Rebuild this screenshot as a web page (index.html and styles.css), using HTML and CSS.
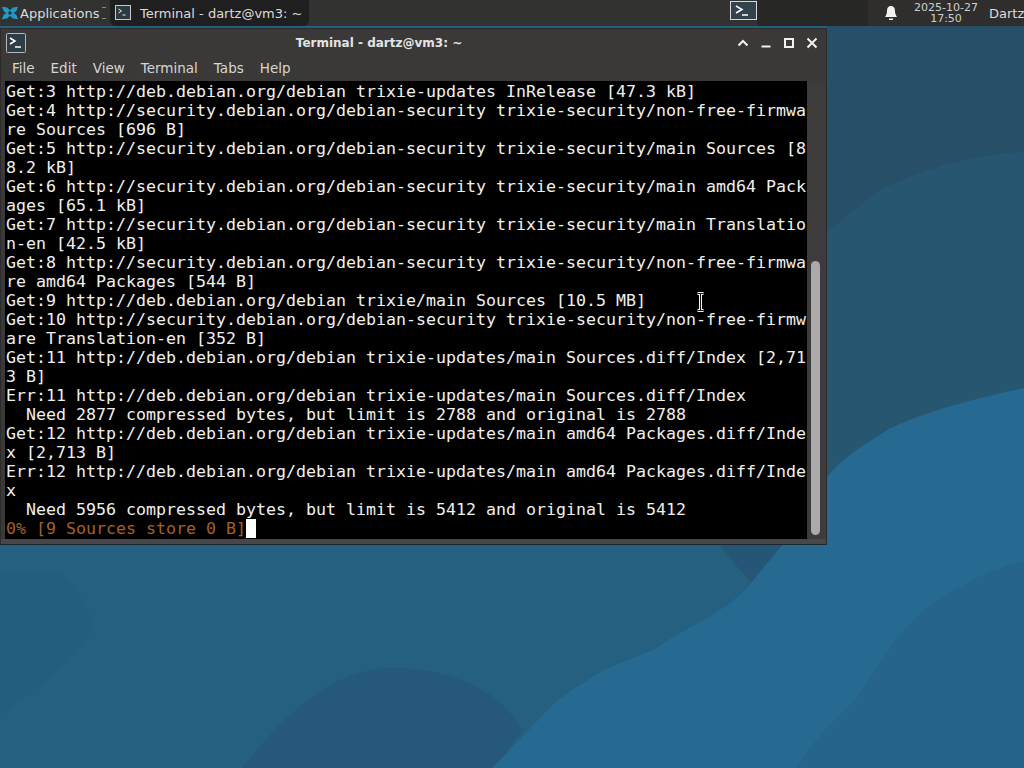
FILE: index.html
```html
<!DOCTYPE html>
<html lang="en">
<head>
<meta charset="utf-8">
<title>Terminal - dartz@vm3: ~</title>
<link rel="stylesheet" href="styles.css">
</head>
<body>
<svg class="wallpaper" viewBox="0 0 1024 768" preserveAspectRatio="none" aria-hidden="true">
  <rect width="1024" height="768" fill="#256080"/>
  <path d="M0 573H60C90 600 100 630 80 650C50 680 20 700 0 715Z" fill="#245e7e"/>
  <path d="M242 768C280 720 330 668 392 668C450 668 500 690 522 730L496 768Z" fill="#25587a"/>
  <path d="M718 544H790L751 583Z" fill="#265676"/>
  <path d="M827 477C840 460 860 447 887 430C910 418 953 403 1024 388V768H492C515 745 535 722 555 703C570 690 580 685 588 680C610 665 630 660 653 650C690 625 730 610 751 583C765 565 775 555 783 544H827Z" fill="#266a92"/>
  <path d="M797 768C810 740 840 720 862 690C880 660 900 630 927 607C960 585 990 570 1024 560V768Z" fill="#26648b"/>
  <path d="M827 232C845 218 860 205 880 190C905 178 930 168 953 163C980 157 1000 153 1024 152V388C953 403 910 418 887 430C860 447 840 460 827 477Z" fill="#275670"/>
  <path d="M827 26H1024V152C1000 153 980 157 953 163C930 168 905 178 880 190C860 205 845 218 827 232Z" fill="#284f68"/>
</svg>

<header class="panel">
  <div class="apps">
    <svg class="logo" viewBox="0 0 20 20" aria-hidden="true">
      <path d="M1 3l6 1 3 3 3-3 6-1-2 5-3 2 3 2 2 5-6-1-3-3-3 3-6 1 2-5 3-2-3-2z" fill="#1f9bc4"/>
      <circle cx="10" cy="10" r="2" fill="#1b3340"/>
    </svg>
    <span>Applications</span>
    <span class="sep"></span>
  </div>
  <div class="task">
    <svg class="task-icon" viewBox="0 0 16 16" aria-hidden="true">
      <rect x=".5" y=".5" width="15" height="14" fill="#2c3a42" stroke="#c9c9c9"/>
      <path d="M3.500 4l3 2-3 2M7.500 10h3" fill="none" stroke="#eee"/>
    </svg>
    <span>Terminal - dartz@vm3: ~</span>
  </div>
  <div class="spacer"></div>
  <div class="launcher">
    <svg class="launch-icon" viewBox="0 0 27 19" aria-hidden="true">
      <rect x=".5" y=".5" width="26" height="18" fill="#33434d" stroke="#d8d8d8"/>
      <path d="M6 5l6 3.500-6 3.500M12 14h6" fill="none" stroke="#fff" stroke-width="1.500"/>
    </svg>
  </div>
  <div class="panel-dark"></div>
  <div class="tray">
    <svg class="bell" viewBox="0 0 14 16" aria-hidden="true">
      <path d="M7 1c3 0 4 2.500 4 5 0 3 1 4.500 2 6H1c1-1.500 2-3 2-6 0-2.500 1-5 4-5z" fill="#f2f2f2"/>
      <rect x="5" y="13.500" width="4" height="1.500" fill="#f2f2f2"/>
    </svg>
    <div class="clock"><span>2025-10-27</span><span>17:50</span></div>
    <span class="user">Dartz</span>
  </div>
</header>

<main class="window">
  <div class="titlebar">
    <svg class="win-icon" viewBox="0 0 20 20" aria-hidden="true">
      <rect x=".5" y=".5" width="19" height="19" rx="1" fill="#2d3c45" stroke="#b8b8b8"/>
      <path d="M4 5l5 3-5 3M9 14h6" fill="none" stroke="#fff" stroke-width="1.500"/>
    </svg>
    <div class="title">Terminal - dartz@vm3: ~</div>
    <div class="controls">
      <svg viewBox="0 0 12 12" aria-hidden="true"><path d="M1.500 8.500L6 4l4.500 4.500" fill="none" stroke="#f2f2f2" stroke-width="2"/></svg>
      <svg viewBox="0 0 12 12" aria-hidden="true"><path d="M1.500 9.500h9" stroke="#f2f2f2" stroke-width="2"/></svg>
      <svg viewBox="0 0 12 12" aria-hidden="true"><rect x="2" y="2" width="8" height="8" fill="none" stroke="#f2f2f2" stroke-width="2"/></svg>
      <svg viewBox="0 0 12 12" aria-hidden="true"><path d="M1.500 1.500l9 9M10.500 1.500l-9 9" stroke="#f2f2f2" stroke-width="2"/></svg>
    </div>
  </div>
  <nav class="menubar">
    <span>File</span><span>Edit</span><span>View</span><span>Terminal</span><span>Tabs</span><span>Help</span>
  </nav>
  <div class="term-row">
    <pre class="term">Get:3 http://deb.debian.org/debian trixie-updates InRelease [47.3 kB]
Get:4 http://security.debian.org/debian-security trixie-security/non-free-firmwa
re Sources [696 B]
Get:5 http://security.debian.org/debian-security trixie-security/main Sources [8
8.2 kB]
Get:6 http://security.debian.org/debian-security trixie-security/main amd64 Pack
ages [65.1 kB]
Get:7 http://security.debian.org/debian-security trixie-security/main Translatio
n-en [42.5 kB]
Get:8 http://security.debian.org/debian-security trixie-security/non-free-firmwa
re amd64 Packages [544 B]
Get:9 http://deb.debian.org/debian trixie/main Sources [10.5 MB]
Get:10 http://security.debian.org/debian-security trixie-security/non-free-firmw
are Translation-en [352 B]
Get:11 http://deb.debian.org/debian trixie-updates/main Sources.diff/Index [2,71
3 B]
Err:11 http://deb.debian.org/debian trixie-updates/main Sources.diff/Index
  Need 2877 compressed bytes, but limit is 2788 and original is 2788
Get:12 http://deb.debian.org/debian trixie-updates/main amd64 Packages.diff/Inde
x [2,713 B]
Err:12 http://deb.debian.org/debian trixie-updates/main amd64 Packages.diff/Inde
x
  Need 5956 compressed bytes, but limit is 5412 and original is 5412
<span class="progress">0% [9 Sources store 0 B]</span><span class="cursor"> </span></pre>
    <div class="scrollbar"><div class="thumb"></div></div>
    <svg class="ibeam" viewBox="0 0 9 20" aria-hidden="true">
      <path d="M1.500 1.500h6M4.500 1.500v17M1.500 18.500h6" fill="none" stroke="#f4f4f4" stroke-width="3"/>
      <path d="M1.500 1.500h6M4.500 1.500v17M1.500 18.500h6" fill="none" stroke="#111" stroke-width="1"/>
    </svg>
  </div>
</main>
</body>
</html>
```
FILE: styles.css
```css
* { box-sizing: border-box; }
html, body { margin: 0; height: 100%; }
body {
  width: 1024px;
  height: 768px;
  overflow: hidden;
  position: relative;
  background: #256080;
  font-family: "DejaVu Sans", sans-serif;
  color: #e6e6e6;
}
.wallpaper { position: absolute; inset: 0; width: 1024px; height: 768px; }
.panel {
  position: relative;
  height: 26px;
  background: #323231;
  display: flex;
  align-items: center;
  font-size: 13px;
  color: #dcdcdc;
}
.apps { display: flex; align-items: center; width: 110px; height: 26px; padding-left: 1px; gap: 1px; }
.logo { width: 18px; height: 18px; flex: none; }
.sep { width: 4px; height: 12px; margin-left: 2px; border-top: 1px solid #888; border-bottom: 1px solid #888; }
.task {
  width: 199px;
  height: 26px;
  background: #1f1f1f;
  border-radius: 0 0 6px 6px;
  display: flex;
  align-items: center;
  gap: 9px;
  padding-left: 5px;
  white-space: nowrap;
}
.task-icon { width: 16px; height: 16px; flex: none; }
.spacer { flex: 1; }
.launcher { width: 27px; display: flex; justify-content: center; flex: none; }
.launch-icon { width: 27px; height: 19px; margin-bottom: 5px; }
.panel-dark { width: 111px; height: 26px; background: #272725; flex: none; }
.tray { width: 156px; height: 26px; background: #2f2e2c; display: flex; align-items: center; padding-left: 16px; flex: none; }
.bell { width: 14px; height: 16px; flex: none; }
.clock {
  width: 64px;
  flex: none;
  margin-left: 16px;
  display: flex;
  flex-direction: column;
  align-items: center;
  font-size: 11px;
  line-height: 11px;
  white-space: nowrap;
  color: #cfcfcf;
}
.user { margin-left: 11px; white-space: nowrap; }
.window {
  position: absolute;
  left: 0;
  top: 28px;
  width: 827px;
  height: 517px;
  background: #484648;
  border: 1px solid #2a2a2a;
  border-bottom-color: #1a2630;
  display: flex;
  flex-direction: column;
}
.titlebar { height: 27px; display: flex; align-items: center; position: relative; padding-left: 5px; flex: none; background: #3a3938; }
.win-icon { width: 20px; height: 20px; flex: none; }
.title {
  position: absolute;
  left: 0;
  width: 756px;
  text-align: center;
  font-size: 12px;
  font-weight: 700;
  color: #e4e4e4;
}
.controls { margin-left: auto; margin-right: 8px; display: flex; gap: 11px; }
.controls svg { width: 12px; height: 12px; }
.menubar {
  height: 25px;
  flex: none;
  display: flex;
  gap: 16px;
  align-items: center;
  padding: 0 0 2px 11px;
  font-size: 13.500px;
  color: #d6d6d6;
  background: #3a3938;
}
.term-row { position: relative; display: flex; height: 458px; padding-left: 4px; background: #3a3938; }
.term {
  width: 802px;
  height: 458px;
  margin: 0;
  padding: 1px 0 0 1px;
  background: #000;
  color: #f0f0f0;
  font-family: "DejaVu Sans Mono", monospace;
  font-size: 16.610px;
  line-height: 19px;
  overflow: hidden;
  white-space: pre;
}
.progress { color: #a4602a; }
.cursor { display: inline-block; width: 10px; height: 19px; background: #fff; vertical-align: top; }
.scrollbar { flex: 1; display: flex; flex-direction: column; justify-content: flex-end; padding: 0 6px 4px 4px; background: #3d3b3c; }
.thumb { height: 274px; background: #aaaaaa; border-radius: 5px; }
.ibeam { position: absolute; left: 695px; top: 211px; width: 9px; height: 20px; }
```
